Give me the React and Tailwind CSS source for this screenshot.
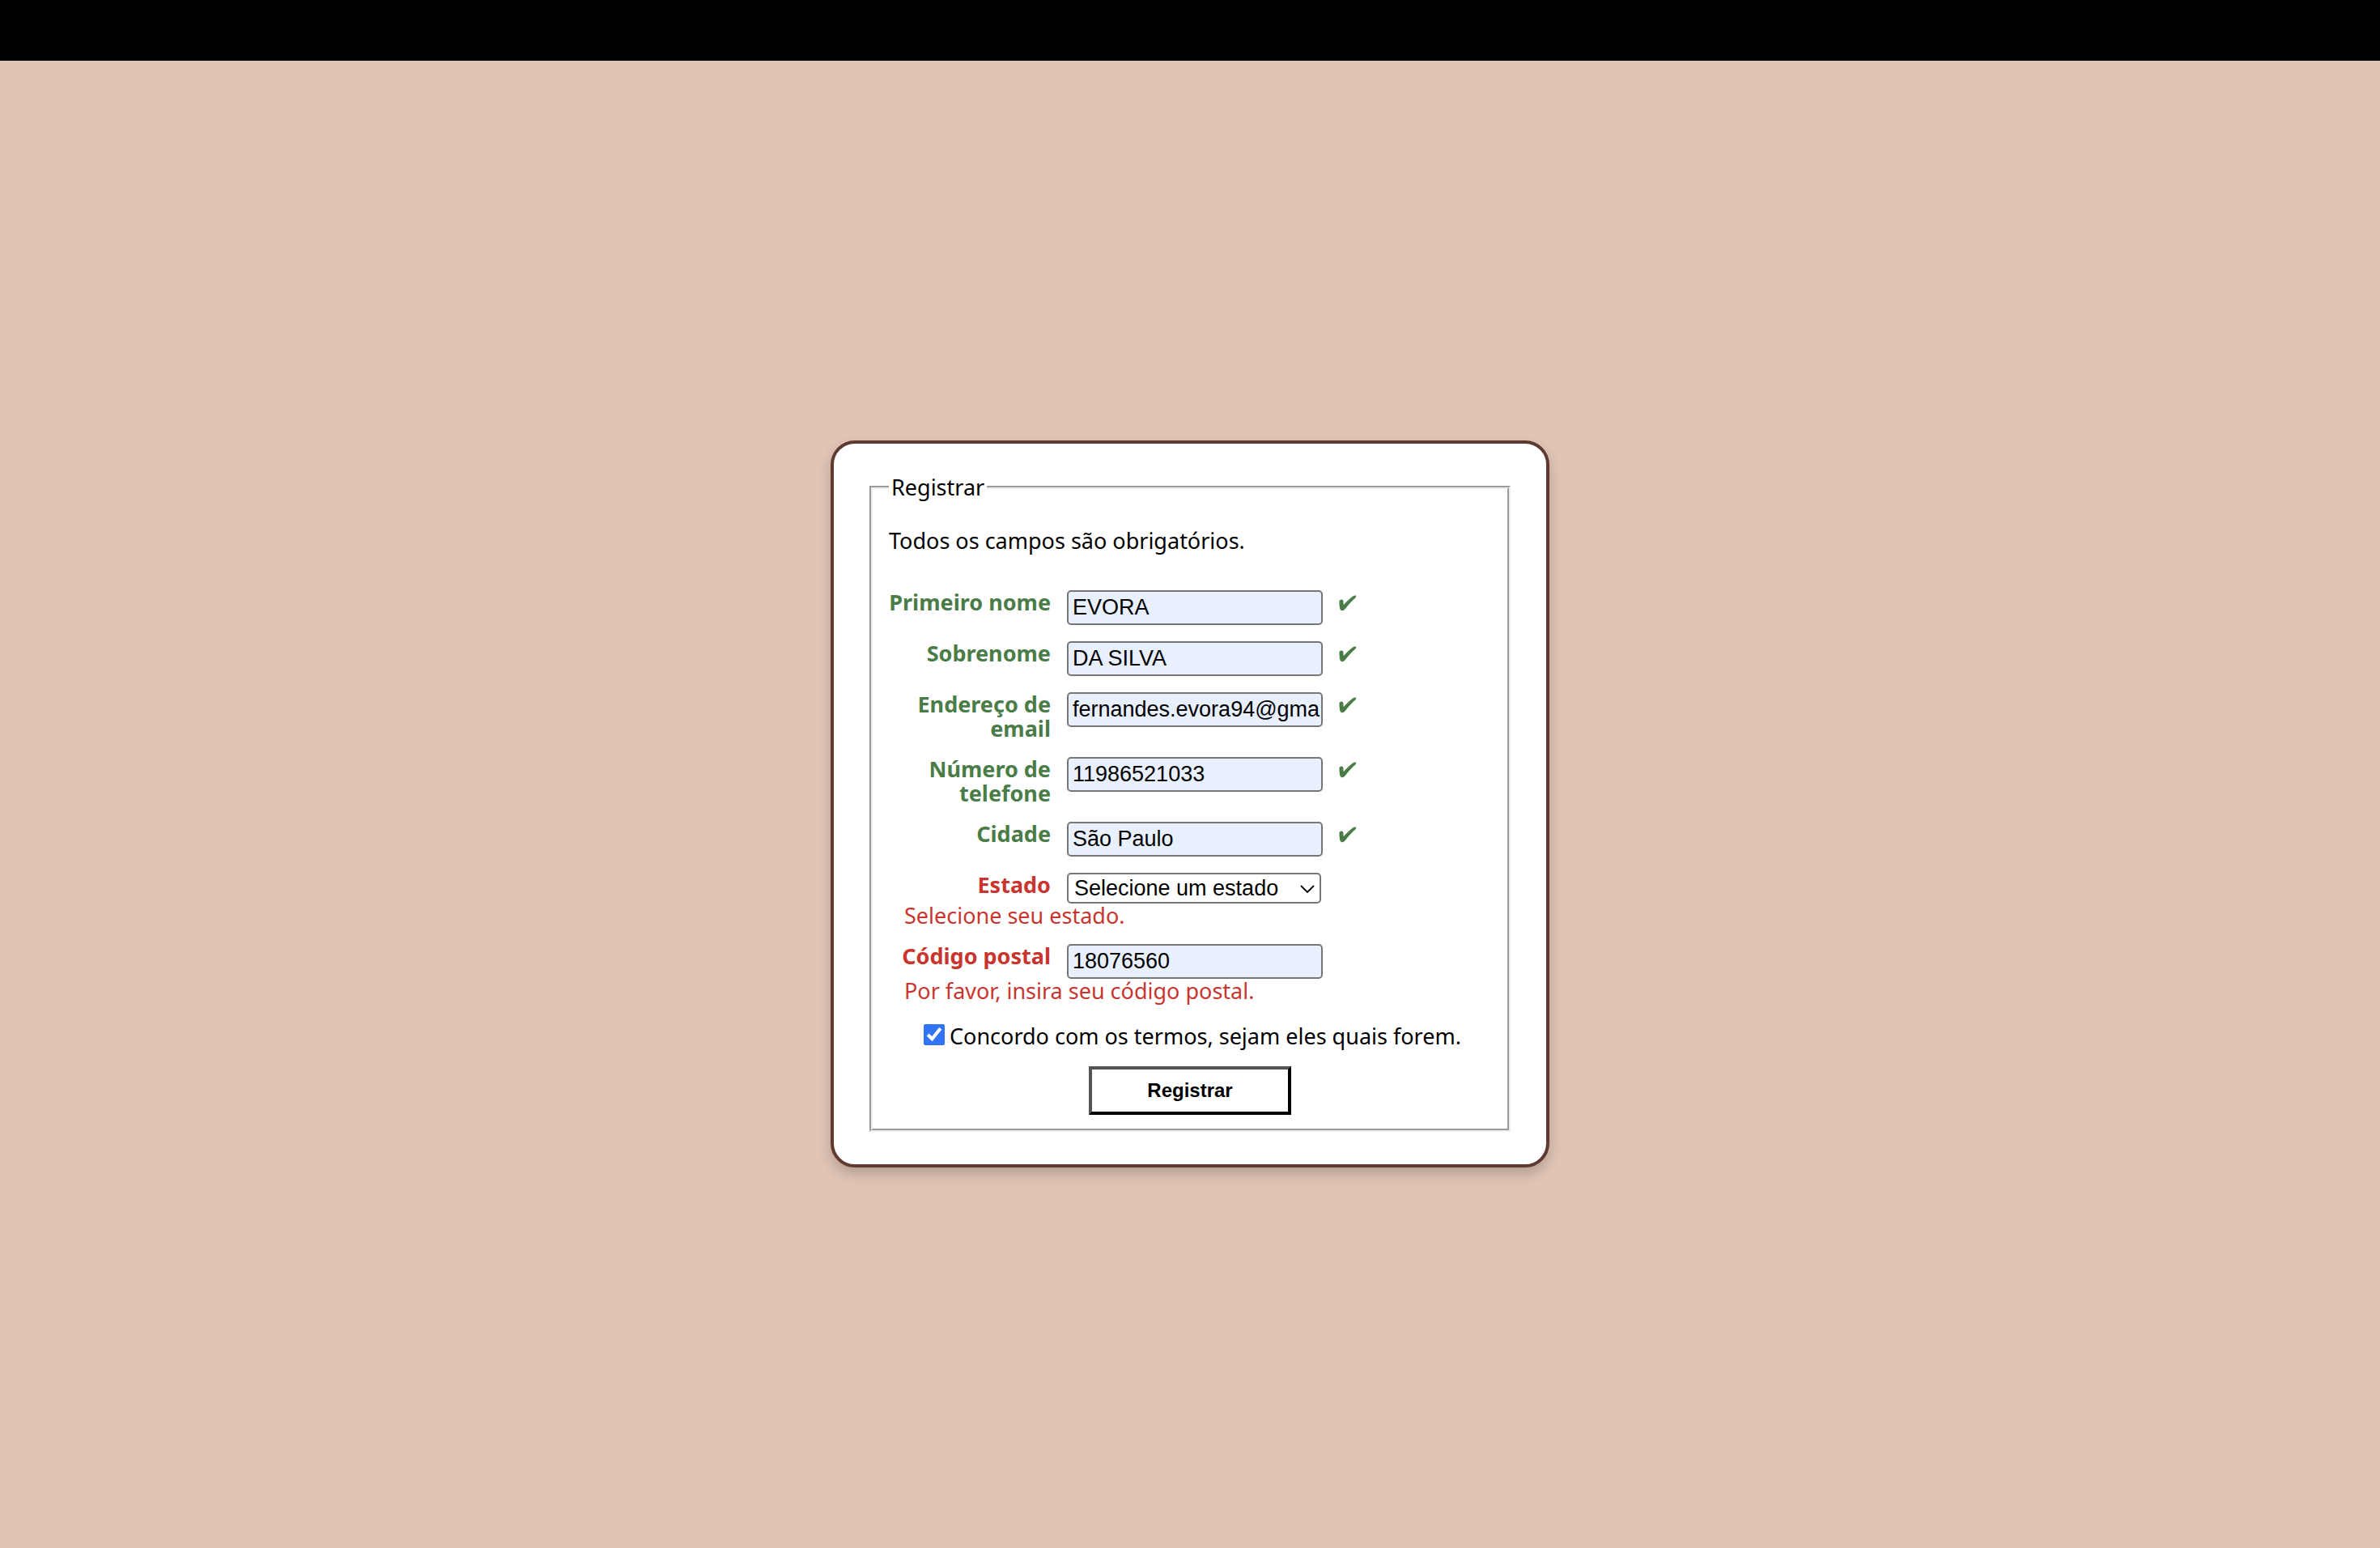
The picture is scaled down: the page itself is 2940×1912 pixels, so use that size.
import React from "react";

const fields = [
  { id: "first-name", label: "Primeiro nome", value: "EVORA", type: "text" },
  { id: "last-name", label: "Sobrenome", value: "DA SILVA", type: "text" },
  { id: "email", label: "Endereço de email", value: "fernandes.evora94@gma", type: "email" },
  { id: "phone", label: "Número de telefone", value: "11986521033", type: "tel" },
  { id: "city", label: "Cidade", value: "São Paulo", type: "text" },
];

function CheckMark() {
  return (
    <svg viewBox="0 0 22 20" className="mt-1.5 h-5 w-[22px] shrink-0" fill="#4a7c48" aria-hidden="true">
      <path d="M0.4 8.4C0.3 6.8 1.6 5.6 3.2 5.6C5 5.7 5.6 7.2 5.5 8.8C5.5 10 5.5 11.2 5.9 11.9C8.9 8.6 13.2 4 17.4 1.2C18.8 0.4 20.4 0.1 21 0.8C21.6 1.8 20.8 3 19.8 4C15.6 7.6 11.4 12.2 8.2 16.6C6.8 18.4 5.2 19.6 3.4 19.2C1.6 18.8 1.1 17 0.8 14.6C0.5 12.4 0.5 10.4 0.4 8.4Z" />
    </svg>
  );
}

function Row({ id, label, tone, valid, children }) {
  return (
    <div className="-ml-2 flex items-start gap-5">
      <label htmlFor={id} className={"w-52 shrink-0 text-right font-bold " + tone}>
        {label}
      </label>
      {children}
      {valid && <CheckMark />}
    </div>
  );
}

function TextInput({ id, type, value }) {
  return (
    <input
      id={id}
      type={type}
      defaultValue={value}
      className="h-[43px] w-[316px] rounded-[5px] border-2 border-[#767676] bg-[#e8effd] pl-[5px] font-['Liberation_Sans',Arial,sans-serif] text-[27px] text-black"
    />
  );
}

export default function App() {
  return (
    <div className="flex min-h-screen flex-col bg-[#e0c5b5] font-['Noto_Sans','Open_Sans',sans-serif] text-[27px] leading-[30px] text-black">
      <header className="h-[75px] bg-black" />
      <main className="flex flex-1 items-center justify-center pb-px">
        <form
          className="w-full max-w-[888px] rounded-[30px] border-4 border-[#5e3a31] bg-white px-10 pt-[39px] pb-10 shadow-[0_8px_16px_rgba(0,0,0,0.2)]"
          onSubmit={(e) => e.preventDefault()}
        >
          <fieldset className="mx-1 border-4 border-[#eeeeee] px-5 pb-[17px] [border-style:groove]">
            <legend className="px-[3px]">Registrar</legend>
            <p className="mt-9">Todos os campos são obrigatórios.</p>
            <div className="mt-[46px] flex flex-col gap-5">
              {fields.map((f) => (
                <Row key={f.id} id={f.id} label={f.label} tone="text-[#4a7c48]" valid>
                  <TextInput id={f.id} type={f.type} value={f.value} />
                </Row>
              ))}
              <div>
                <Row id="state" label="Estado" tone="text-[#c8352f]">
                  <div className="relative w-[314px]">
                    <select
                      id="state"
                      className="block h-[38px] w-full appearance-none rounded-[5px] border-2 border-[#767676] bg-white pl-[7px] font-['Liberation_Sans',Arial,sans-serif] text-[27px] leading-[34px] text-black"
                    >
                      <option>Selecione um estado</option>
                    </select>
                    <svg
                      viewBox="0 0 18 10"
                      className="pointer-events-none absolute top-[15px] right-2 h-2.5 w-[18px]"
                      fill="none"
                      stroke="#000"
                      strokeWidth="1.8"
                      aria-hidden="true"
                    >
                      <path d="M1 1L9 9L17 1" />
                    </svg>
                  </div>
                </Row>
                <p className="pl-[19px] text-[#c8352f]">Selecione seu estado.</p>
              </div>
              <div>
                <Row id="zip" label="Código postal" tone="text-[#c8352f]">
                  <TextInput id="zip" type="text" value="18076560" />
                </Row>
                <p className="pl-[19px] text-[#c8352f]">Por favor, insira seu código postal.</p>
              </div>
            </div>
            <div className="mt-[26px] flex items-start gap-1.5 pl-[43px]">
              <input id="terms" type="checkbox" defaultChecked className="size-[26px] shrink-0 accent-[#3174f6]" />
              <label htmlFor="terms">Concordo com os termos, sejam eles quais forem.</label>
            </div>
            <button
              type="submit"
              className="mx-auto mt-[22px] block h-[60px] w-[250px] border-4 border-black bg-white font-['Liberation_Sans',Arial,sans-serif] text-2xl font-bold text-black [border-style:outset]"
            >
              Registrar
            </button>
          </fieldset>
        </form>
      </main>
    </div>
  );
}
